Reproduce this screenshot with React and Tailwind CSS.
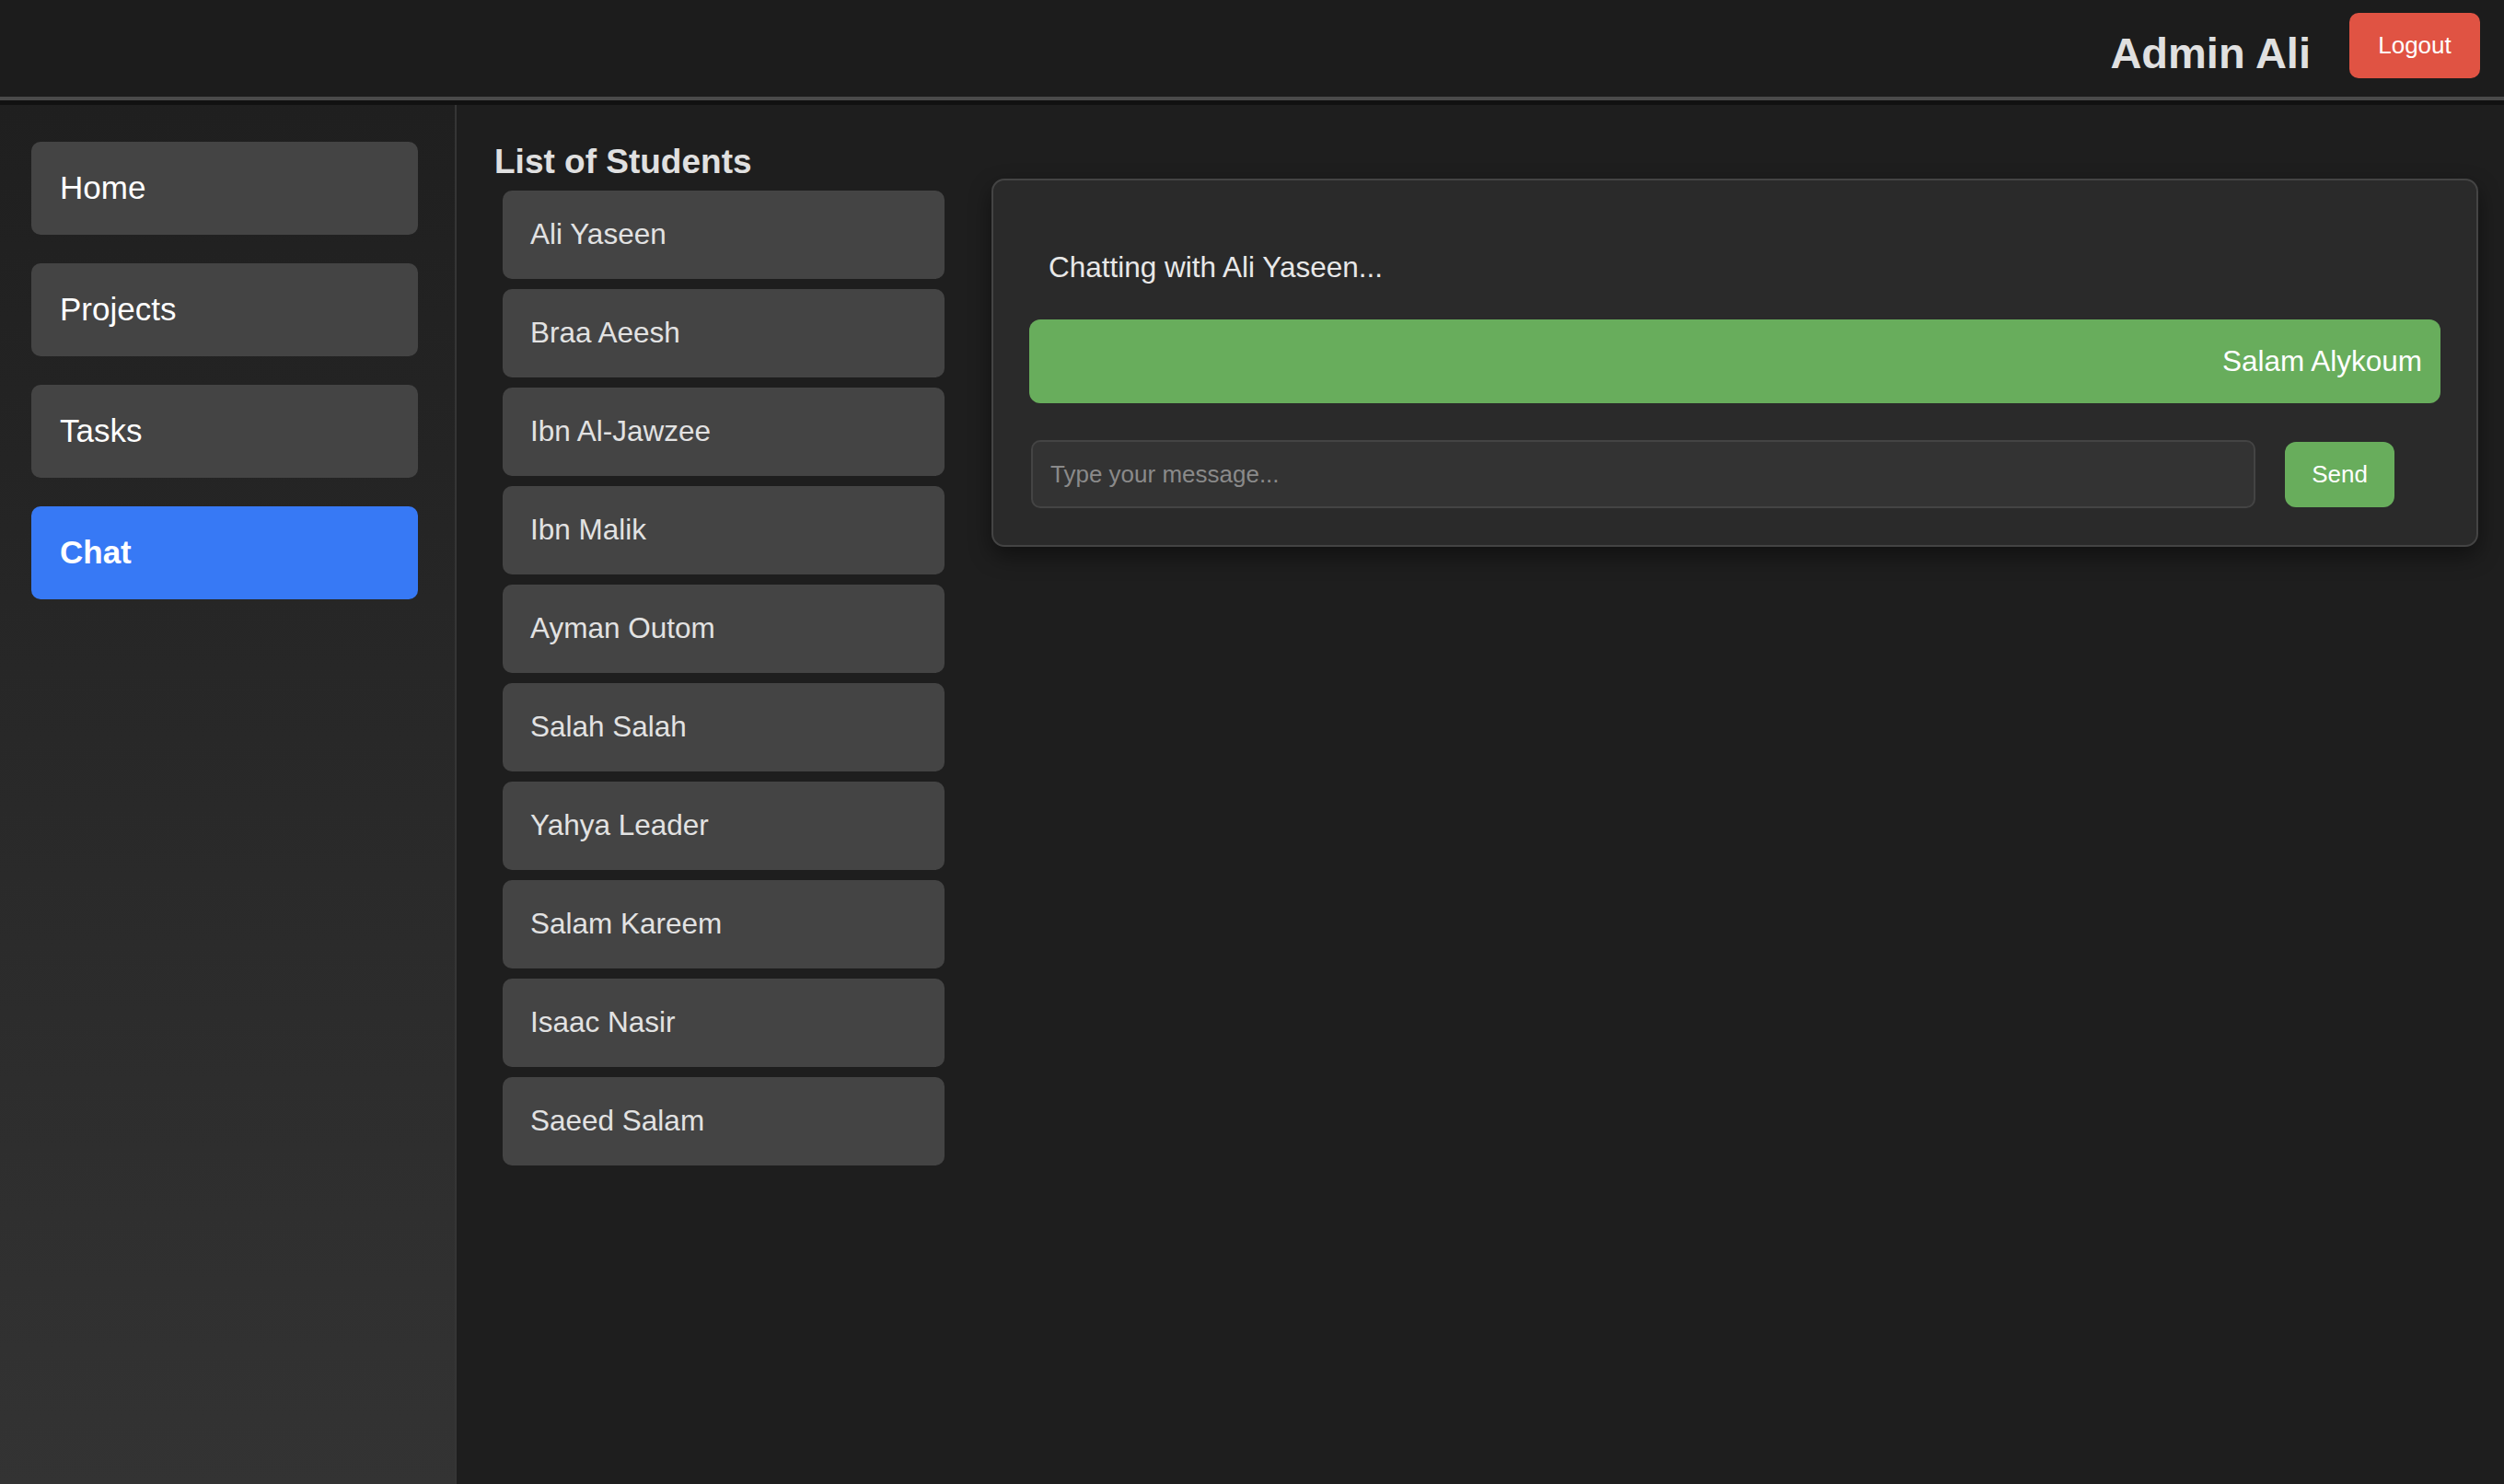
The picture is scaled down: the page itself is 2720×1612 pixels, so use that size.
import React, { useState } from "react";

const navItems = ["Home", "Projects", "Tasks", "Chat"];

const students = [
  "Ali Yaseen",
  "Braa Aeesh",
  "Ibn Al-Jawzee",
  "Ibn Malik",
  "Ayman Outom",
  "Salah Salah",
  "Yahya Leader",
  "Salam Kareem",
  "Isaac Nasir",
  "Saeed Salam",
];

const App = () => {
  const [active] = useState("Chat");
  const [selected, setSelected] = useState("Ali Yaseen");
  const [message, setMessage] = useState("");
  const [messages, setMessages] = useState(["Salam Alykoum"]);

  const sendMessage = () => {
    if (!message.trim()) return;
    setMessages((prev) => [...prev, message.trim()]);
    setMessage("");
  };

  return (
    <div className="min-h-screen w-full flex flex-col bg-[#1e1e1e] font-['Liberation_Sans',Arial,sans-serif]">
      {/* Header */}
      <header className="h-[109px] bg-[#1c1c1c] border-b-4 border-[#4a4a4a] flex items-start justify-end pr-[26px]">
        <h1 className="mt-[34px] text-[47px] leading-none font-bold text-[#e0e0e0]">
          Admin Ali
        </h1>
        <button className="ml-[42px] mt-[14px] w-[142px] h-[71px] rounded-[10px] bg-[#e05343] text-white text-[26px]">
          Logout
        </button>
      </header>
      <div className="h-[5px] bg-[#111111]"></div>

      <div className="flex flex-1">
        {/* Sidebar */}
        <aside className="w-[496px] shrink-0 border-r-2 border-[#353535] bg-gradient-to-b from-[#1f1f1f] to-[#333333] pt-[40px] pl-[34px]">
          <nav className="flex flex-col gap-[31px]">
            {navItems.map((item) => (
              <button
                key={item}
                className={
                  item === active
                    ? "w-[420px] h-[101px] rounded-[10px] bg-[#3779f5] text-white text-[35px] font-bold text-left pl-[31px]"
                    : "w-[420px] h-[101px] rounded-[10px] bg-[#444444] text-white text-[35px] text-left pl-[31px]"
                }
              >
                {item}
              </button>
            ))}
          </nav>
        </aside>

        {/* Main */}
        <main className="flex-1 flex items-start pl-[41px] pt-[43px] pr-[28px]">
          <div className="shrink-0">
            <h2 className="text-[37px] leading-none font-bold text-[#e0e0e0]">
              List of Students
            </h2>
            <ul className="mt-[13px] ml-[9px] flex flex-col gap-[11px]">
              {students.map((name) => (
                <li key={name}>
                  <button
                    onClick={() => setSelected(name)}
                    className="w-[480px] h-[96px] rounded-[10px] bg-[#444444] text-[#e2e2e2] text-[31.5px] text-left pl-[30px]"
                  >
                    {name}
                  </button>
                </li>
              ))}
            </ul>
          </div>

          <section className="flex-1 ml-[51px] mt-[37px] border-2 border-[#444444] bg-[#2a2a2a] rounded-[14px] shadow-[0_10px_24px_rgba(0,0,0,0.45)] px-[39px] pt-[39px] pb-[40px]">
            <div className="h-[112px] flex items-center pl-[21px] text-[31.5px] text-[#e8e8e8]">
              Chatting with {selected}...
            </div>
            <div className="flex flex-col gap-[12px]">
              {messages.map((m, i) => (
                <div
                  key={i}
                  className="h-[91px] rounded-[12px] bg-[#68ad5c] flex items-center justify-end pr-[20px] text-[31.5px] text-white"
                >
                  {m}
                </div>
              ))}
            </div>
            <div className="mt-[40px] flex items-center">
              <input
                type="text"
                value={message}
                onChange={(e) => setMessage(e.target.value)}
                placeholder="Type your message..."
                className="flex-1 ml-[2px] h-[74px] rounded-[10px] border-2 border-[#444444] bg-[#333333] pl-[19px] text-[26px] text-white placeholder:text-[#8a8a8a] outline-none"
              />
              <button
                onClick={sendMessage}
                className="ml-[32px] mr-[50px] w-[119px] h-[71px] rounded-[12px] bg-[#68ad5c] text-white text-[26px]"
              >
                Send
              </button>
            </div>
          </section>
        </main>
      </div>
    </div>
  );
};

export default App;
